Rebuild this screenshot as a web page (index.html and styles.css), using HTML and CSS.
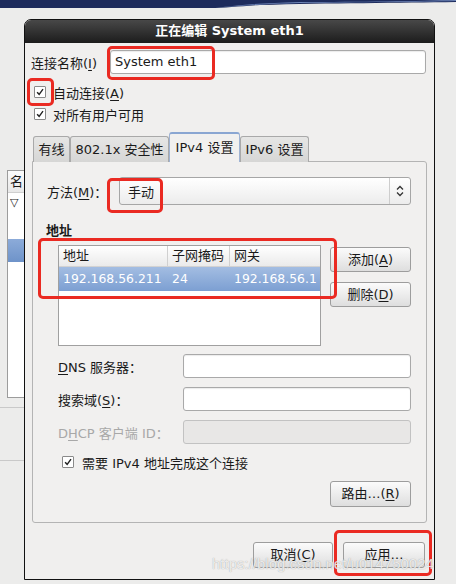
FILE: index.html
```html
<!DOCTYPE html>
<html lang="zh-CN">
<head>
    <meta charset="UTF-8">
    <meta name="viewport" content="width=device-width, initial-scale=1.0">
    <title>正在编辑 System eth1</title>
    <link rel="stylesheet" href="styles.css">
</head>
<body>
    <!-- 桌面顶部面板 -->
    <div class="top-band">
        <svg width="456" height="10" viewBox="0 0 456 10">
            <rect x="0" y="0" width="456" height="10" fill="#ececeb"/>
            <path d="M0 0 H456 V2 C400 3 330 3 260 5 C240 6 225 8 210 8 H0 Z" fill="#1d2b5c"/>
            <path d="M215 8 C240 6 260 4 300 3 C360 2 420 2 456 1 V0 C420 1 360 2 300 2 C260 3 240 5 215 8 Z" fill="#6f86b8"/>
        </svg>
    </div>

    <!-- 后面的网络连接窗口 -->
    <div class="bg-window">
        <div class="bg-list">
            <div class="bg-head">名</div>
            <div class="bg-row">▽</div>
            <div class="bg-row"></div>
            <div class="bg-row bg-selected"></div>
        </div>
        <div class="bg-line"></div>
        <div class="bg-line second"></div>
    </div>

    <div class="dialog">
        <div class="titlebar">正在编辑 System eth1</div>

        <div class="name-row">
            <span class="name-label">连接名称(<u>I</u>)</span>
            <div class="entry name-entry">System eth1</div>
        </div>

        <div class="check-row first">
            <span class="check"><svg viewBox="0 0 12 12"><path d="M2.5 6.2 L5 8.8 L9.6 2.6" fill="none" stroke="#222" stroke-width="1.7"/></svg></span>
            <span>自动连接(<u>A</u>)</span>
        </div>
        <div class="check-row">
            <span class="check"><svg viewBox="0 0 12 12"><path d="M2.5 6.2 L5 8.8 L9.6 2.6" fill="none" stroke="#222" stroke-width="1.7"/></svg></span>
            <span>对所有用户可用</span>
        </div>

        <div class="notebook">
            <div class="tabs">
                <div class="tab">有线</div>
                <div class="tab">802.1x 安全性</div>
                <div class="tab active">IPv4 设置</div>
                <div class="tab">IPv6 设置</div>
            </div>
            <div class="panel">
                <div class="method-row">
                    <span class="method-label">方法(<u>M</u>)：</span>
                    <div class="combo">
                        <span class="combo-text">手动</span>
                        <span class="combo-arrow">
                            <svg width="10" height="12" viewBox="0 0 10 12"><path d="M2 4.5 L5 1.5 L8 4.5 M2 7.5 L5 10.5 L8 7.5" fill="none" stroke="#333" stroke-width="1.3"/></svg>
                        </span>
                    </div>
                </div>

                <div class="section-title">地址</div>

                <div class="address-row">
                    <div class="tree">
                        <div class="tree-head">
                            <span class="col c1">地址</span>
                            <span class="col c2">子网掩码</span>
                            <span class="col c3">网关</span>
                        </div>
                        <div class="tree-row selected">
                            <span class="col c1">192.168.56.211</span>
                            <span class="col c2">24</span>
                            <span class="col c3">192.168.56.1</span>
                        </div>
                    </div>
                    <div class="side-buttons">
                        <div class="button">添加(<u>A</u>)</div>
                        <div class="button">删除(<u>D</u>)</div>
                    </div>
                </div>

                <div class="form-grid">
                    <span class="form-label"><u>D</u>NS 服务器：</span>
                    <div class="entry"></div>
                    <span class="form-label">搜索域(<u>S</u>)：</span>
                    <div class="entry"></div>
                    <span class="form-label disabled">D<u>H</u>CP 客户端 ID：</span>
                    <div class="entry disabled"></div>
                </div>

                <div class="check-row inner">
                    <span class="check"><svg viewBox="0 0 12 12"><path d="M2.5 6.2 L5 8.8 L9.6 2.6" fill="none" stroke="#222" stroke-width="1.7"/></svg></span>
                    <span>需要 IPv4 地址完成这个连接</span>
                </div>

                <div class="route-row">
                    <div class="button">路由…(<u>R</u>)</div>
                </div>
            </div>
        </div>

        <div class="action-row">
            <div class="button cancel">取消(<u>C</u>)</div>
            <div class="button apply">应用…</div>
        </div>
    </div>

    <!-- 红色标注框 -->
    <div class="mark mark-name"></div>
    <div class="mark mark-auto"></div>
    <div class="mark mark-method"></div>
    <div class="mark mark-address"></div>
    <div class="mark mark-apply"></div>

    <div class="watermark">https://blog.csdn.net/u014750024</div>
</body>
</html>
```

FILE: styles.css
```css
* {
    margin: 0;
    padding: 0;
    box-sizing: border-box;
}

body {
    width: 456px;
    height: 584px;
    overflow: hidden;
    position: relative;
    background: #ececeb;
    font-family: 'DejaVu Sans', 'Noto Sans CJK SC', sans-serif;
    font-size: 13px;
    color: #1a1a1a;
}

u {
    text-decoration: underline;
    text-underline-offset: 2px;
}

.top-band {
    height: 10px;
    line-height: 0;
}

/* 背景窗口 */
.bg-window {
    position: absolute;
    left: 0;
    top: 160px;
    width: 24px;
    height: 320px;
}

.bg-list {
    margin-left: 7px;
    margin-top: 10px;
    height: 228px;
    background: #fff;
    border: 1px solid #9c9c9c;
    border-right: none;
}

.bg-head {
    height: 22px;
    line-height: 22px;
    padding-left: 2px;
    background: linear-gradient(#fbfbfb, #e8e8e8);
    border-bottom: 1px solid #cfcfcf;
}

.bg-row {
    height: 23px;
    line-height: 20px;
    padding-left: 2px;
    font-size: 11px;
}

.bg-selected {
    background: linear-gradient(#8cabd9, #6e93c9);
}

.bg-line {
    margin-top: 9px;
    height: 1px;
    background: #c9c9c9;
}

.bg-line.second {
    margin-top: 52px;
}

/* 对话框 */
.dialog {
    position: absolute;
    left: 24px;
    top: 19px;
    width: 411px;
    height: 561px;
    background: #f0efee;
    border: 1px solid #111;
    border-radius: 7px 7px 0 0;
    overflow: hidden;
}

.titlebar {
    height: 24px;
    line-height: 24px;
    margin-top: -1px;
    background: linear-gradient(#4a4a4a, #1c1c1c);
    color: #fff;
    font-weight: bold;
    text-align: center;
    font-size: 13px;
}

.name-row {
    display: flex;
    align-items: center;
    padding: 7px 8px 0 6px;
}

.name-label {
    width: 79px;
}

.entry {
    height: 24px;
    line-height: 22px;
    padding-left: 4px;
    background: #fff;
    border: 1px solid #a9a9a9;
    border-radius: 3px;
    box-shadow: inset 0 1px 1px rgba(0, 0, 0, 0.08);
}

.name-entry {
    flex: 1;
}

.check-row {
    display: flex;
    align-items: center;
    gap: 7px;
    height: 22px;
    padding-left: 9px;
}

.check-row.first {
    margin-top: 7px;
}

.check {
    width: 12px;
    height: 12px;
    background: #fff;
    border: 1px solid #8a8a8a;
    border-radius: 1px;
    display: flex;
}

.check svg {
    width: 10px;
    height: 10px;
}

/* 选项卡 */
.notebook {
    margin: 7px 7px 0 7px;
}

.tabs {
    display: flex;
    align-items: flex-end;
    height: 30px;
    padding-left: 1px;
    margin-bottom: -1px;
    position: relative;
    z-index: 1;
}

.tab {
    height: 26px;
    line-height: 25px;
    padding: 0 4px;
    white-space: nowrap;
    text-align: center;
    background: linear-gradient(#e6e6e5, #d6d6d5);
    border: 1px solid #a9a9a9;
    border-bottom: none;
    border-radius: 3px 3px 0 0;
}

.tab:nth-child(1) { width: 37px; padding: 0 2px; }
.tab:nth-child(2) { width: 99px; }
.tab:nth-child(4) { width: 69px; }

.tab.active {
    width: 71px;
    height: 30px;
    line-height: 28px;
    background: #f1f0ef;
    border-color: #9fb3d3;
    border-top: 2px solid #8aa6d2;
}

.panel {
    height: 362px;
    padding: 15px 15px 0 14px;
    background: #f1f0ef;
    border: 1px solid #b4b4b4;
    border-radius: 0 3px 3px 3px;
}

.method-row {
    display: flex;
    align-items: center;
}

.method-label {
    width: 72px;
}

.combo {
    flex: 1;
    height: 28px;
    display: flex;
    align-items: center;
    background: linear-gradient(#ffffff, #ececec);
    border: 1px solid #a6a6a6;
    border-radius: 3px;
}

.combo-text {
    flex: 1;
    padding-left: 8px;
}

.combo-arrow {
    width: 21px;
    height: 26px;
    display: flex;
    align-items: center;
    justify-content: center;
    border-left: 1px solid #cdcdcd;
}

.section-title {
    margin-top: 18px;
    height: 16px;
    line-height: 16px;
    font-weight: bold;
    margin-left: -1px;
}

.address-row {
    display: flex;
    gap: 9px;
    margin-top: 6px;
    padding-left: 11px;
}

.tree {
    width: 263px;
    height: 101px;
    background: #fff;
    border: 1px solid #a0a0a0;
}

.tree-head,
.tree-row {
    display: flex;
}

.tree-head {
    height: 21px;
    line-height: 20px;
    background: linear-gradient(#ffffff, #eaeaea);
    border-bottom: 1px solid #d2d2d2;
}

.tree-row {
    height: 24px;
    line-height: 24px;
    font-size: 12.4px;
}

.tree-row.selected {
    background: linear-gradient(#a3bde2, #7c9fd2);
    color: #fff;
}

.col {
    padding-left: 4px;
    white-space: nowrap;
}

.c1 { width: 108px; }
.c2 { width: 62px; }
.c3 { flex: 1; }

.tree-head .c2,
.tree-head .c3 {
    border-left: 1px solid #d0d0d0;
}

.tree-row .c2,
.tree-row .c3 {
    padding-left: 5px;
}

.side-buttons {
    display: flex;
    flex-direction: column;
    gap: 10px;
    margin-top: 2px;
}

.button {
    width: 81px;
    height: 26px;
    line-height: 24px;
    text-align: center;
    background: linear-gradient(#fbfbfb, #dedede);
    border: 1px solid #9d9d9d;
    border-radius: 3px;
}

.side-buttons .button {
    height: 25px;
    line-height: 23px;
}

.form-grid {
    display: grid;
    grid-template-columns: 125px 1fr;
    row-gap: 9px;
    align-items: center;
    margin-top: 8px;
    padding-left: 11px;
}

.form-label.disabled {
    color: #a8a8a8;
}

.entry.disabled {
    background: #e8e7e6;
    border-color: #c2c2c2;
    box-shadow: none;
}

.check-row.inner {
    margin-top: 7px;
    padding-left: 15px;
    gap: 8px;
}

.route-row {
    display: flex;
    justify-content: flex-end;
    margin-top: 8px;
}

.action-row {
    display: flex;
    justify-content: flex-end;
    gap: 10px;
    margin-top: 19px;
    padding-right: 9px;
}

.button.cancel {
    width: 80px;
}

.button.apply {
    width: 82px;
}

/* 标注框 */
.mark {
    position: absolute;
    border: 3px solid #ea2a22;
    border-radius: 5px;
}

.mark-name { left: 107px; top: 46px; width: 108px; height: 34px; }
.mark-auto { left: 27px; top: 78px; width: 27px; height: 28px; }
.mark-method { left: 107px; top: 178px; width: 56px; height: 35px; }
.mark-address { left: 38px; top: 238px; width: 299px; height: 61px; }
.mark-apply { left: 334px; top: 530px; width: 98px; height: 46px; }

.watermark {
    position: absolute;
    left: 212px;
    top: 555px;
    font-family: 'Liberation Sans', sans-serif;
    font-size: 15px;
    color: rgba(255, 255, 255, 0.8);
    text-shadow: 0 0 1px rgba(110, 110, 110, 0.7);
    white-space: nowrap;
}
```
